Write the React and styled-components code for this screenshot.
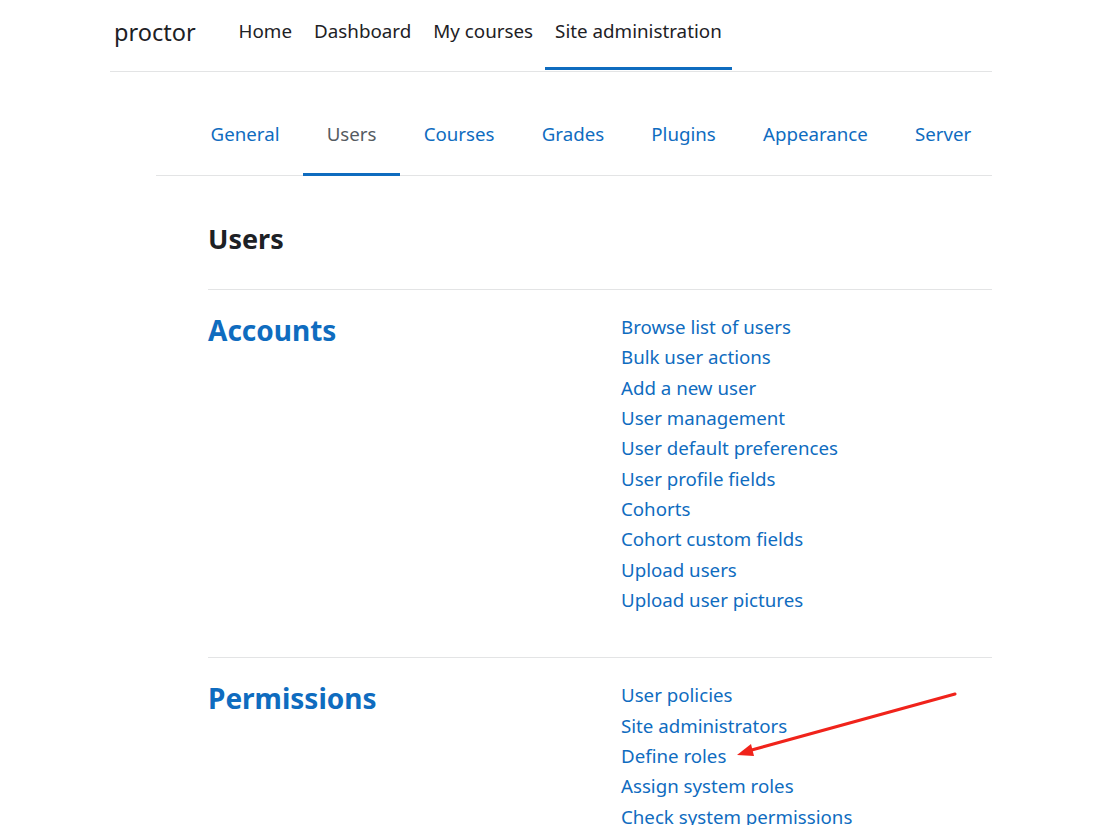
import React from 'react';
import styled, {createGlobalStyle} from 'styled-components';

const GlobalStyle = createGlobalStyle`
  body {
    margin: 0;
    background: #fff;
    font-family: "Noto Sans", "Open Sans", sans-serif;
    color: #1d2125;
  }
`;

const Page = styled.div`
  position: relative;
  width: 1100px;
  height: 825px;
  overflow: hidden;
`;

const Header = styled.header`
  display: flex;
  align-items: stretch;
  margin-left: 110px;
  width: 882px;
  height: 71px;
  border-bottom: 1px solid #e3e4e5;
`;

const Brand = styled.div`
  display: flex;
  align-items: center;
  padding: 0 33px 7px 4px;
  font-size: 23.5px;
  color: #1d2125;
`;

const PrimaryNav = styled.nav`
  display: flex;
  gap: 2px;
`;

const PrimaryItem = styled.a`
  display: flex;
  align-items: center;
  padding: 0 10px 6px;
  font-size: 18.8px;
  color: #1d2125;
  border-bottom: 3px solid ${p => (p.$active ? '#0f6cbf' : 'transparent')};
  margin-bottom: 1px;
`;

const TabBar = styled.nav`
  display: flex;
  margin: 22px 0 0 156px;
  width: 836px;
  height: 82px;
  padding-left: 31px;
  box-sizing: border-box;
  border-bottom: 1px solid #e3e4e5;
`;

const Tab = styled.a`
  display: flex;
  align-items: center;
  padding: 0 23.6px;
  font-size: 18.7px;
  color: ${p => (p.$active ? '#555b61' : '#0f6cbf')};
  border-bottom: 3px solid ${p => (p.$active ? '#0f6cbf' : 'transparent')};
  margin-bottom: -1px;
`;

const Main = styled.main`
  margin-left: 208px;
  width: 784px;
`;

const Title = styled.h1`
  margin: 45px 0 32px;
  font-size: 27px;
  line-height: 36px;
  font-weight: 700;
  color: #1d2125;
`;

const Section = styled.section`
  display: grid;
  grid-template-columns: 413px 1fr;
  border-top: 1px solid #e3e4e5;
  padding: 22px 0 42px;
`;

const SectionTitle = styled.h2`
  margin: 0;
  font-size: 28px;
  line-height: 36px;
  font-weight: 700;
  color: #0f6cbf;
`;

const LinkList = styled.ul`
  list-style: none;
  margin: 0;
  padding: 0;
`;

const LinkItem = styled.li`
  font-size: 18.7px;
  line-height: 30.33px;
  color: #0f6cbf;
`;

const Arrow = styled.svg`
  position: absolute;
  left: 0;
  top: 0;
  pointer-events: none;
`;

const primary = ['Home', 'Dashboard', 'My courses', 'Site administration'];
const tabs = ['General', 'Users', 'Courses', 'Grades', 'Plugins', 'Appearance', 'Server'];

const sections = [
  {
    title: 'Accounts',
    links: [
      'Browse list of users',
      'Bulk user actions',
      'Add a new user',
      'User management',
      'User default preferences',
      'User profile fields',
      'Cohorts',
      'Cohort custom fields',
      'Upload users',
      'Upload user pictures',
    ],
  },
  {
    title: 'Permissions',
    links: [
      'User policies',
      'Site administrators',
      'Define roles',
      'Assign system roles',
      'Check system permissions',
    ],
  },
];

const App = () => (
  <Page>
    <GlobalStyle />
    <Header>
      <Brand>proctor</Brand>
      <PrimaryNav>
        {primary.map(item => (
          <PrimaryItem key={item} $active={item === 'Site administration'}>
            {item}
          </PrimaryItem>
        ))}
      </PrimaryNav>
    </Header>
    <TabBar>
      {tabs.map(tab => (
        <Tab key={tab} $active={tab === 'Users'}>
          {tab}
        </Tab>
      ))}
    </TabBar>
    <Main>
      <Title>Users</Title>
      {sections.map(section => (
        <Section key={section.title}>
          <SectionTitle>{section.title}</SectionTitle>
          <LinkList>
            {section.links.map(link => (
              <LinkItem key={link}>{link}</LinkItem>
            ))}
          </LinkList>
        </Section>
      ))}
    </Main>
    <Arrow width="1100" height="825" viewBox="0 0 1100 825">
      <line x1="955" y1="694" x2="748" y2="751" stroke="#f0231b" strokeWidth="3" strokeLinecap="round" />
      <polygon points="737,755 751,744 754,756" fill="#f0231b" />
    </Arrow>
  </Page>
);

export default App;
